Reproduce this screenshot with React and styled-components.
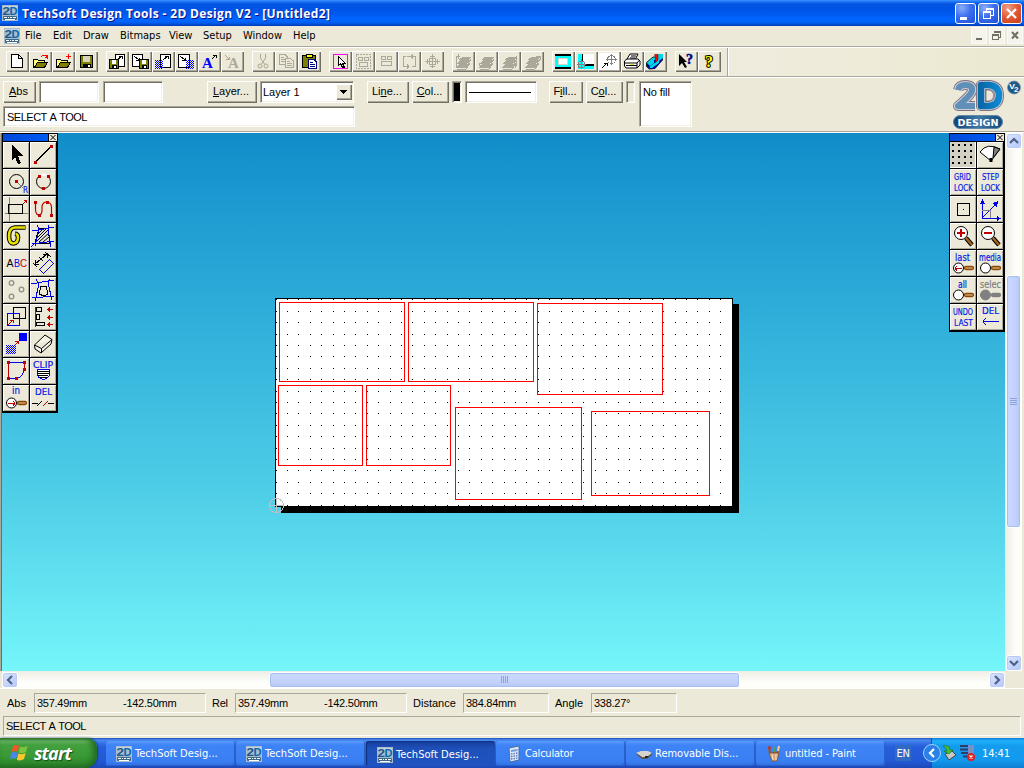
import React from "react";
import styled, { createGlobalStyle } from "styled-components";

const UI = `"DejaVu Sans Condensed", "Noto Sans", "Liberation Sans", sans-serif`;
const SANS = `"Liberation Sans", Arial, sans-serif`;

const GlobalStyle = createGlobalStyle`
  * { box-sizing: border-box; }
  html, body { margin: 0; padding: 0; overflow: hidden; }
  svg { display: block; flex: none; overflow: visible; }
`;

const Desktop = styled.div`
  width: 1024px;
  height: 768px;
  display: flex;
  flex-direction: column;
  overflow: hidden;
  background: #ece9d8;
  color: #000;
  font: 11px ${SANS};
  white-space: nowrap;
  cursor: default;
`;

/* ---------- title bar ---------- */
const TitleBar = styled.header`
  height: 26px;
  flex: none;
  display: flex;
  align-items: center;
  padding: 0 2px 0 2px;
  background: linear-gradient(#3d95ff 0, #1a6ff5 2px, #0353e0 4px, #0054e3 8px, #0059ee 14px, #0066ff 19px, #0063fb 22px, #0050d8 24px, #003bb5 26px);
`;
const TitleText = styled.h1`
  flex: 1;
  margin: 0 0 0 4px;
  font: bold 12px "Open Sans", "Noto Sans", sans-serif;
  letter-spacing: 0.34px;
  color: #fff;
  text-shadow: 1px 1px #0f1089;
`;
const CaptionButtons = styled.div`
  display: flex;
  gap: 2px;
`;
const CaptionButton = styled.div`
  width: 21px;
  height: 21px;
  border: 1px solid #fff;
  border-radius: 3px;
  background: ${(p) =>
    p.$close
      ? "radial-gradient(circle at 30% 20%, #f0a088 0, #e25c3a 45%, #c83c14 100%)"
      : "radial-gradient(circle at 30% 20%, #8aaef8 0, #3c6ff0 45%, #1c4fd8 100%)"};
`;

/* ---------- menu bar ---------- */
const MenuBar = styled.nav`
  height: 22px;
  flex: none;
  display: flex;
  align-items: center;
  padding: 0 1px 2px 4px;
  border-bottom: 1px solid #fff;
  box-shadow: inset 0 -1px #aca899;
  font-family: ${UI};
`;
const MenuItems = styled.div`
  display: flex;
  flex: 1;
  margin-left: 5px;
`;
const MenuItem = styled.span`
  width: ${(p) => p.$w}px;
`;
const ChildButtons = styled.div`
  display: flex;
  gap: 2px;
`;
const ChildButton = styled.div`
  width: 16px;
  height: 17px;
  background: #f5f4ec;
  border: 1px solid #fbfaf6;
`;

/* ---------- toolbar ---------- */
const Toolbar = styled.div`
  height: 30px;
  flex: none;
  display: flex;
  align-items: flex-start;
  gap: 8px;
  padding: 3px 0 0 6px;
  border-bottom: 1px solid #fff;
  box-shadow: inset 0 -1px #aca899;
  background: linear-gradient(90deg, transparent 728px, #efecdf 729px, #ece9d0);
`;
const ButtonGroup = styled.div`
  display: flex;
`;
const ToolButton = styled.div`
  width: 23px;
  height: 21px;
  background: #ece9d8;
  box-shadow: inset 1px 1px #fff, inset -1px -1px #716f64, inset -2px -2px #aca899;
  & > svg { margin-left: -1px; }
`;
const ToolbarEnd = styled.div`
  width: 2px;
  height: 28px;
  margin: -3px 0 0 -2px;
  background: #fff;
  border-left: 1px solid #aca899;
`;

/* ---------- property bar ---------- */
const PropertyBar = styled.div`
  height: 55px;
  flex: none;
  display: flex;
  align-items: flex-start;
  padding: 3px 3px 0;
  border-bottom: 1px solid #fff;
  box-shadow: inset 0 -1px #aca899;
`;
const PropertyLeft = styled.div`
  width: 351px;
  display: flex;
  flex-direction: column;
  gap: 3px;
`;
const PropertyRow = styled.div`
  display: flex;
  margin-left: ${(p) => p.$ml || 0}px;
`;
const PushButton = styled.div`
  width: ${(p) => p.$w}px;
  height: 22px;
  margin-left: ${(p) => p.$ml || 0}px;
  display: flex;
  align-items: center;
  justify-content: center;
  padding: 0 2px 2px 0;
  box-shadow: inset 1px 1px #fff, inset -1px -1px #716f64, inset -2px -2px #aca899;
`;
const Field = styled.div`
  width: ${(p) => p.$w}px;
  height: ${(p) => p.$h || 22}px;
  margin-left: ${(p) => p.$ml || 0}px;
  flex: none;
  padding: 4px 2px 0 3px;
  background: ${(p) => p.$bg || "#fff"};
  border: 1px solid;
  border-color: #aca899 #fff #fff #aca899;
  box-shadow: inset 1px 1px #716f64, inset -1px -1px #f1efe2;
  letter-spacing: ${(p) => p.$ls || 0}px;
  word-spacing: ${(p) => p.$ws || 0}px;
`;
const ComboField = styled(Field)`
  display: flex;
  justify-content: space-between;
  padding: 2px 1px 2px 2px;
  line-height: 17px;
`;
const ComboArrow = styled.div`
  width: 16px;
  height: 16px;
  background: #ece9d8;
  box-shadow: inset 1px 1px #fff, inset -1px -1px #716f64, inset -2px -2px #aca899;
`;
const LogoBox = styled.div`
  margin: -2px 0 0 auto;
`;

/* ---------- work area ---------- */
const Work = styled.main`
  height: 538px;
  flex: none;
  display: flex;
  padding: 0 1px 0 2px;
  background: #ece9d8;
  box-shadow: inset 1px 0 #aca899, inset 2px 0 #716f64;
`;
const Canvas = styled.div`
  position: relative;
  width: 1003px;
  height: 538px;
  background: linear-gradient(#108cc8 0%, #1c99d0 12%, #31b0db 36%, #50cfe8 68%, #74f6fa 100%);
`;
const Sheet = styled.div`
  position: absolute;
  left: 265px;
  top: 163px;
`;
const Palette = styled.aside`
  position: absolute;
  top: 0;
  left: ${(p) => p.$x}px;
  width: 56px;
  padding: 1px 2px 2px 1px;
  background: #000;
  display: flex;
  flex-direction: column;
  gap: 1px;
`;
const PaletteTitle = styled.div`
  height: 7px;
  margin-right: -1px;
  background: linear-gradient(90deg, #0048d8, #0060f8);
  display: flex;
  justify-content: flex-end;
`;
const PaletteGrid = styled.div`
  display: grid;
  grid-template-columns: 26px 26px;
  grid-auto-rows: 26px;
  gap: 1px;
`;
const Cell = styled.div`
  background: ${(p) => (p.$pressed ? "#d4d0c4" : "#ece9d8")};
  box-shadow: ${(p) =>
    p.$pressed ? "inset -1px -1px #fff" : "inset 1px 1px #fff, inset -1px -1px #aca899"};
`;

/* ---------- scroll bars ---------- */
const VScroll = styled.div`
  width: 17px;
  height: 538px;
  display: flex;
  flex-direction: column;
  align-items: center;
  background: linear-gradient(90deg, #eeede5, #fefefb 70%);
`;
const HScroll = styled.div`
  height: 17px;
  width: 1003px;
  margin-left: 2px;
  flex: none;
  display: flex;
  align-items: center;
  background: linear-gradient(#eeede5, #fefefb 70%);
`;
const HRow = styled.div`
  height: 17px;
  flex: none;
`;
const ScrollButton = styled.div`
  width: 16px;
  height: 16px;
  flex: none;
  border: 1px solid #fff;
  border-radius: 3px;
  background: linear-gradient(135deg, #dbe5ff, #b5c8fb);
  box-shadow: inset 0 0 0 1px #b9cbf5;
`;
const Thumb = styled.div`
  width: ${(p) => p.$w}px;
  height: ${(p) => p.$h}px;
  margin: ${(p) => p.$m};
  flex: none;
  display: flex;
  align-items: center;
  justify-content: center;
  border: 1px solid #fff;
  border-radius: 3px;
  background: linear-gradient(${(p) => (p.$vertical ? "90deg" : "180deg")}, #cbd9ff, #c3d3fd 60%, #b5c8f5);
  box-shadow: inset 0 0 0 1px #a9bfee;
`;

/* ---------- status ---------- */
const StatusArea = styled.footer`
  height: 50px;
  flex: none;
  padding: 4px 3px 0;
  border-top: 1px solid #fff;
`;
const StatusRow = styled.div`
  height: 20px;
  display: flex;
  align-items: center;
  margin-bottom: 3px;
`;
const StatusLabel = styled.span`
  width: ${(p) => p.$w}px;
  flex: none;
  padding-left: ${(p) => p.$pl}px;
  letter-spacing: ${(p) => p.$ls || 0}px;
`;
const StatusField = styled.div`
  width: ${(p) => p.$w}px;
  height: 20px;
  flex: none;
  display: flex;
  align-items: center;
  padding-left: 2px;
  letter-spacing: ${(p) => p.$ls || -0.26}px;
  word-spacing: ${(p) => p.$ws || 0}px;
  border: 1px solid;
  border-color: #aca899 #fff #fff #aca899;
  & > span { width: 86px; flex: none; }
  & > span + span { width: auto; }
`;

/* ---------- taskbar ---------- */
const Taskbar = styled.div`
  height: 30px;
  flex: none;
  display: flex;
  align-items: stretch;
  background: linear-gradient(#1f4fb8 0, #4a8cf2 2px, #3672e4 5px, #245edb 9px, #2358d4 24px, #1c49b4 30px);
  color: #fff;
  font-family: ${UI};
`;
const StartButton = styled.div`
  width: 97px;
  display: flex;
  align-items: center;
  padding: 0 0 1px 10px;
  gap: 5px;
  border-radius: 0 10px 12px 0;
  background: linear-gradient(#2f7a30 0, #6cb866 3px, #43a03f 7px, #389a36 18px, #2f8a2d 25px, #236f22 30px);
  box-shadow: inset -4px 0 6px #226a22, 1px 0 2px #143e90;
  font: italic bold 18px "Open Sans", "Noto Sans", sans-serif;
  letter-spacing: -0.9px;
  text-shadow: 1px 1px 1px #1c4c1c;
`;
const TaskList = styled.div`
  display: flex;
  flex: 1;
  gap: 1px;
  padding: 3px 0 2px 9px;
`;
const TaskButton = styled.div`
  width: 129px;
  display: flex;
  align-items: center;
  gap: 3px;
  padding: ${(p) => (p.$active ? "2px 0 0 11px" : "0 0 0 10px")};
  border-radius: 3px;
  letter-spacing: ${(p) => p.$ls || 0}px;
  background: ${(p) =>
    p.$active
      ? "linear-gradient(#173b98, #1e50b9 30%, #1f53c0)"
      : "linear-gradient(#5c9bfb 0, #3f84f7 4px, #3a7ff2 20px, #2f6fe0 25px)"};
  box-shadow: ${(p) => (p.$active ? "inset 1px 1px 1px #12307c" : "inset -1px -1px #2a60cc")};
`;
const Lang = styled.div`
  width: 16px;
  height: 16px;
  margin: 7px 20px 0 0;
  background: #316ac5;
  line-height: 17px;
  text-align: center;
  letter-spacing: -0.4px;
`;
const Tray = styled.div`
  position: relative;
  width: 93px;
  display: flex;
  align-items: center;
  justify-content: flex-end;
  padding-right: 14px;
  letter-spacing: -0.1px;
  border-left: 1px solid #0c59b9;
  background: linear-gradient(#0c7ee0 0, #1fb0f8 3px, #139bee 8px, #129aee 22px, #0d7ed2 30px);
`;
const TrayIcons = styled.div`
  position: absolute;
  left: -10px;
  top: 4px;
`;

/* ---------- drawing helpers ---------- */
const Svg = ({ w = 26, h = 26, children, crisp = true }) => (
  <svg width={w} height={h} viewBox={`0 0 ${w} ${h}`} fill="none" stroke="#000" shapeRendering={crisp ? "crispEdges" : "auto"}>
    {children}
  </svg>
);
const Dots = ({ at, c = "#c00000", s = 3 }) => (
  <g fill={c} stroke="none">
    {at.map(([x, y], i) => (
      <rect key={i} x={x - 1} y={y - 1} width={s} height={s} />
    ))}
  </g>
);
const Label = ({ x, y, w, c = "#0018e8", s = 9, children }) => (
  <text x={x} y={y} textLength={w} lengthAdjust="spacingAndGlyphs" fill={c} stroke={c} strokeWidth=".2" fontFamily="DejaVu Sans, sans-serif" fontSize={s}>
    {children}
  </text>
);
const Lens = ({ fill = "#fff", handle = "#8a4800", y = 18, stroke = "#000" }) => (
  <g shapeRendering="auto">
    <circle cx="8.5" cy={y} r="5" fill={fill} stroke={stroke} />
    <rect x="14.5" y={y - 1.5} width="9" height="3" rx="1.5" fill={handle === "#808080" ? handle : "#c8a070"} stroke={handle} strokeWidth="1.3" />
  </g>
);
const Arrow = () => <path d="M9 3V18L12 15L15 22L18 21L15 14H20Z" fill="#000" stroke="none" />;

const AppIcon = ({ size = 16 }) => (
  <svg width={size} height={size} viewBox="0 0 16 16">
    <rect width="16" height="16" fill="#a9bccb" />
    <path d="M1 1H15V3H1Z" fill="#c5d5e0" />
    <g fontFamily="Liberation Sans" fontWeight="bold" fontSize="11">
      <text x="0.5" y="9.5" textLength="7.5" lengthAdjust="spacingAndGlyphs" fill="#1c5888">2</text>
      <text x="7.5" y="9.5" textLength="8" lengthAdjust="spacingAndGlyphs" fill="#0868b0">D</text>
    </g>
    <rect x="1" y="11" width="14" height="4" rx="1" fill="#3c6888" />
    <path d="M2 12.5H5M6 12.5H7M8 12.5H10M11 12.5H14M3 14.5H13" stroke="#fff" />
  </svg>
);

/* ---------- toolbar drawings ---------- */
const Folder = () => (
  <g>
    <path d="M5.5 16.5V8.5H9.5L10.5 9.5H16.5V11.5" fill="#ffff80" />
    <path d="M6.5 16.5L9.5 11.5H19.5L16.5 16.5Z" fill="#808000" />
  </g>
);
const Disk = ({ x, y, s = 13 }) => (
  <g transform={`translate(${x} ${y})`}>
    <rect x=".5" y=".5" width={s - 1} height={s - 1} fill="#808000" />
    <rect x="3" y="1" width={s - 6} height={s / 2 - 1} fill={s > 11 ? "#d8d4c0" : "#fff"} stroke="none" />
    <rect x="3" y={s - 4} width={s - 5} height="4" fill="#000" stroke="none" />
    <rect x={s - 5} y={s - 3} width="2" height="2" fill="#fff" stroke="none" />
  </g>
);
const Dither = ({ x, y, w, h }) => {
  const d = [];
  for (let j = 0; j < h; j++) for (let i = j % 2; i < w; i += 2) d.push(`M${x + i} ${y + j}h1v1h-1z`);
  return <path d={d.join("")} fill="#0000ff" stroke="none" />;
};
const Page = ({ x, y, w = 9, h = 11 }) => <rect x={x + 0.5} y={y + 0.5} width={w} height={h} fill="#fff" />;
const G = "#aca899";
const Layers = ({ extra }) => (
  <g fill={G} stroke={G}>
    <path d="M6 16L9 13H18L15 16ZM7 12L10 9.5H19L16 12ZM9 8.5L12 6H20L17 8.5Z" />
    <path d="M6 18H15L19 12M17 13L20 8" fill="none" />
    <path d={extra} fill="none" />
  </g>
);

const toolGroups = [
  [
    <path key="a" d="M6.5 3.5H13.5L17.5 7.5V16.5H6.5ZM13.5 3.5V7.5H17.5" fill="#fff" />,
    <g key="b"><Folder /><path d="M13 6L15 4H18L19 7M17 6L19.5 7L20 4" stroke="#f00" /></g>,
    <g key="c"><Folder /><path d="M17.5 3V8M15 5.5H20" stroke="#f00" /></g>,
    <Disk key="d" x={6} y={4} />,
  ],
  [
    <g key="a"><Page x={10} y={3} h={12} w={9} /><Disk x={4} y={8} s={10} /><path d="M12 9L17 5M14 5.5H17V8" /></g>,
    <g key="b"><Page x={4} y={3} h={12} w={10} /><Disk x={11} y={8} s={10} /><path d="M6 5L11 9M8 9.5H11V7" /></g>,
    <g key="c"><Page x={9} y={3} h={13} w={10} /><Dither x={4} y={9} w={8} h={9} /><path d="M12 9L17 5M14 5.5H17V8" /></g>,
    <g key="d"><Page x={4} y={3} h={13} w={11} /><Dither x={12} y={9} w={8} h={9} /><path d="M6 5L11 9M8 9.5H11V7" /></g>,
    <g key="e"><text x="5" y="17" fontFamily="Liberation Serif" fontSize="15" fontWeight="bold" fill="#00f" stroke="none">A</text><path d="M15 8L19 4M16 4.5H19V7" /></g>,
    <g key="f"><text x="8" y="17" fontFamily="Liberation Serif" fontSize="15" fontWeight="bold" fill={G} stroke="none">A</text><path d="M5 4L9 8M6 8.5H9V6" stroke={G} /></g>,
  ],
  [
    <g key="a" stroke={G} shapeRendering="auto"><path d="M9.5 3V7L13.5 13M14.5 3V7L10.5 13" /><circle cx="9" cy="15" r="2" /><circle cx="15" cy="15" r="2" /></g>,
    <g key="b" stroke={G}><path d="M5.5 3.5H11L13.5 6V13.5H5.5ZM7 6.5H10M7 8.5H12M7 10.5H12" /><path d="M11.5 7.5H16L19.5 10V16.5H11.5Z" fill="#ece9d8" /><path d="M13 10.5H16M13 12.5H18M13 14.5H18" /></g>,
    <g key="c"><rect x="5.5" y="4.5" width="13" height="12" rx="1" fill="#808000" /><path d="M9 3.5H15V6.5H9Z" fill="#ff0" /><path d="M11.5 8.5H17L19.5 11V17.5H11.5Z" fill="#fff" stroke="#000080" /><path d="M13 11.5H16M13 13.5H18M13 15.5H18" stroke="#000080" /></g>,
  ],
  [
    <g key="a"><rect x="5.5" y="3.5" width="14" height="14" stroke="#f0f" /><path d="M10.5 5.5V14.5L12.5 12.5L14.5 16.5H16.5L14.5 12.5H17.5Z" fill="#fff" /></g>,
    <g key="b" stroke={G}><rect x="5.5" y="3.5" width="14" height="14" strokeDasharray="2 1" /><path d="M7.5 6.5H11.5V9.5H7.5ZM13.5 6.5H17.5V9.5H13.5ZM8.5 11.5H16.5V15.5H8.5Z" /></g>,
    <g key="c" stroke={G}><path d="M7.5 5.5H11.5V8.5H7.5ZM13.5 5.5H17.5V8.5H13.5ZM7.5 10.5H17.5V14.5H7.5Z" /></g>,
    <g key="d" stroke={G}><path d="M9 5.5H6.5V15.5H11M15 15.5H18.5V5.5H10M15.5 3V8M14.5 4V7M10.500 13V18M11.500 14V17" /></g>,
    <g key="e" stroke={G}><path d="M12.5 3V17M5 10.5H20M10 5.5H15M10 15.5H15M7.5 8V13M17.5 8V13M9.5 7.5H15.5V13.5H9.5Z" /></g>,
  ],
  [
    <Layers key="a" extra="M7 15H5.5V5.5H9M7 3V8" />,
    <Layers key="b" extra="M5 14.5H8M5 12V15M10 6.5H13" />,
    <Layers key="c" extra="M19.5 5V14.5H17M18 12V17" />,
    <Layers key="d" extra="M16 5.5H20V9M15 10L20 5" />,
  ],
  [
    <g key="a"><path d="M4 4H20V17H4Z" fill="#00ffff" stroke="none" /><path d="M4 4H20M4 17H20" strokeWidth="2" /><path d="M7.5 7.5H16.5V13.5H7.5Z" fill="#fff" stroke="#d8d4c0" /></g>,
    <g key="b"><path d="M4 3H20V18H4Z" fill="#0ff" stroke="none" /><path d="M9 3H20V13H9Z" fill="#fff" stroke="none" /><path d="M10 14H20" strokeWidth="2" /><path d="M8.5 3V10" /><circle cx="7.5" cy="13.5" r="3.5" stroke="#808080" /><path d="M7.5 8V18M3 13.5H12" stroke="#808080" /></g>,
    <g key="c"><path d="M2 2H22V19H2Z" fill="#fff" stroke="none" /><circle cx="14.5" cy="8.5" r="4" stroke="#808080" /><path d="M14.5 3V14M9 8.5H20" stroke="#808080" /><path d="M5 17L10 12M7 12.5H10V15" /></g>,
    <g key="d" shapeRendering="auto"><path d="M7 8L10 3H18L15 9" fill="#fff" /><path d="M4.5 10L7 8H18L20 10V14L17 17H6L4.5 15Z" fill="#fff" /><path d="M5 12H17L19.5 9M6 14.5H17M11 5H16M10 7H15M17 12V17" /><path d="M10 13.3H14" stroke="#dddd00" /></g>,
    <g key="e" shapeRendering="auto"><path d="M3.5 11.5L10 6H19.5V9L12 17.5L6 18L3.5 15.5Z" fill="#00d5e8" stroke="#000" strokeWidth=".8" /><path d="M4 12L7 15V18L4 15.5ZM7 15L11 12V9L19.5 6.5V9L12 17.5L7 18Z" fill="#000098" stroke="none" /><path d="M14 3H20V7L16 10V12L9 17H7V15L13 11Z" fill="#00d5e8" stroke="none" /><path d="M11.5 3.5H15V9L12.5 11.5V7Z" fill="#f00" stroke="#700" strokeWidth=".5" /></g>,
  ],
  [
    <g key="a" shapeRendering="auto"><path d="M5 3V15L8 12L11 17L13 16L10 11H13Z" fill="#000" stroke="none" /><text x="12" y="13" fontFamily="Liberation Serif" fontWeight="bold" fontSize="14" fill="#000080" stroke="#000080" strokeWidth=".5">?</text></g>,
    <text key="b" x="8" y="16" fontFamily="Liberation Serif" fontWeight="bold" fontSize="16" fill="#ff0" stroke="#000" strokeWidth="2" paintOrder="stroke">?</text>,
  ],
];

/* ---------- palette drawings ---------- */
const B = "#0000e8";
const R = "#c00000";
const leftTools = [
  <Arrow key={0} />,
  <g key={1}><path d="M5.5 20L21.5 4" /><Dots at={[[5, 20], [21, 4]]} /></g>,
  <g key={2}><circle cx="13.5" cy="12.5" r="7" shapeRendering="auto" /><path d="M14 13L20 19" stroke="#808080" /><Dots at={[[13, 12]]} /><Label x={20} y={24} w={5} s={9}>R</Label></g>,
  <g key={3}><circle cx="13.5" cy="12.5" r="7" shapeRendering="auto" /><path d="M9 7Q13.5 4 18 7" stroke="#fff" strokeWidth="2" /><Dots at={[[9, 7], [18, 7], [13, 19]]} /></g>,
  <g key={4}><path d="M6.5 1V25M2 17.5H25" stroke="#808080" /><rect x="5.5" y="8.5" width="14" height="9" /><path d="M20 8L24 4M21 4.5H23.5V7" stroke={R} /></g>,
  <g key={5} stroke={R}><path d="M5.5 7V14Q6 19 9 19Q12 19 12 14V10Q13 6 16.5 6Q21 6 21.5 11V19" shapeRendering="auto" strokeWidth="1.2" /><Dots at={[[5, 6], [9, 19], [17, 6], [21, 19]]} /></g>,
  <g key={6} shapeRendering="auto"><path d="M22.5 4.5H12Q6 5 6 13Q6 20.500 10.500 20.500Q15 20 15 14.500Q15 11 12 10.500" strokeWidth="4.6" /><path d="M22 4.500H12Q6 5 6 13Q6 20.500 10.500 20.500Q15 20 15 14.500Q15 11 12.500 10.700" stroke="#e8e000" strokeWidth="2.6" /></g>,
  <g key={7}><path d="M9 5H18L20 20H5Z" fill="#e0e0d8" /><path d="M8 11L14 5M7 15L17 5M6 19L18 7M9 19L19 10M13 19L19 14" shapeRendering="auto" /><path d="M2 21L24 18M7 2L9 6L5 23M2 7H9L24 4M19 2L18 6L21 24M5 20L1 24" stroke={B} /></g>,
  <g key={8} fontFamily="Liberation Sans" fontSize="11.5" stroke="none"><text x="3.5" y="17" textLength="7" lengthAdjust="spacingAndGlyphs" fill="#000">A</text><text x="11" y="17" textLength="6" lengthAdjust="spacingAndGlyphs" fill={B}>B</text><text x="17" y="17" textLength="7" lengthAdjust="spacingAndGlyphs" fill={R}>C</text></g>,
  <g key={9}><path d="M5 14L17 4M5 10V14H9M13 4H17V8M9 7L13 11M13 7L9 11M3 13L7 17M15 2L21 7" /><path d="M9.5 19.5L19.5 9.5L23.5 13.5L13.5 23.5Z" stroke={B} /></g>,
  <g key={10} stroke="#909088" shapeRendering="auto" strokeWidth="1.3"><circle cx="8.5" cy="6" r="2.3" /><circle cx="18.5" cy="12.5" r="2.3" /><circle cx="8.5" cy="19.5" r="2.3" /></g>,
  <g key={11}><path d="M6 2L9 7L5 24M1 7L24 3M20 2L18 6L22 23M2 21L24 19" stroke={B} /><path d="M11 9H16L18 17L14 19L9 17Z" /></g>,
  <g key={12}><rect x="10.5" y="3.5" width="12" height="11" /><rect x="4.5" y="9.5" width="12" height="12" stroke={B} /><path d="M5 21L10 16M7 16.5H10V19" stroke={R} /></g>,
  <g key={13}><path d="M6.5 3.5H11.5V7.5H6.5ZM6.5 10.5H9.5V15.5H6.5ZM6.5 18.5H14.5V21.5H6.5Z" /><path d="M5.5 3V23M17 5.5H23M17 13.5H23M17 20.5H23M19.5 3V8M18.5 4V7M19.5 11V16M18.5 12V15M19.5 18V23M18.5 19V22" stroke={R} /></g>,
  <g key={14}><rect x="16" y="2" width="8" height="8" fill="#0000ff" stroke="none" /><Dither x={3} y={14} w={10} h={9} /><path d="M12 14L15 11M12 10.5H15V13" stroke={R} /></g>,
  <g key={15} shapeRendering="auto"><path d="M4.5 14L15 4L22 8.5L21 13L11 22L5 18ZM4.5 14L11.5 17.5L22 8.5M11.5 17.5V22" fill="#f5f3e8" /></g>,
  <g key={16}><path d="M5.5 4.5H21.5V11Q20 19 13.5 20.5H5.5Z" stroke={B} /><path d="M5.5 4.5V20.5M21 4.5V11" stroke={R} /><Dots at={[[5, 4], [21, 4], [21, 11], [13, 20], [5, 20]]} /></g>,
  <g key={17}><Label x={3} y={10} w={20} s={9.5}>CLIP</Label><path d="M7.5 11.5H19.5V17Q18 21 13 21.5Q8 20 7.5 17Z" fill="#fff" stroke={B} /><path d="M7 13.5H19M7 15.5H19M8 17.5H18M9 19.5H17" /></g>,
  <g key={18}><Label x={9} y={9} w={8} s={10}>in</Label><Lens /><path d="M5 18.5H12M10 16L12 18L10 21" stroke={R} /></g>,
  <g key={19}><Label x={5} y={10} w={17} s={9.5}>DEL</Label><path d="M2 18.5H8M18 18.5H24" /><path d="M7 21L12 16" /><path d="M13 21L18 16" stroke={R} /></g>,
];

const gridDots = [];
for (let y = 2; y < 25; y += 6) for (let x = 2; x < 25; x += 6) gridDots.push([x + 1, y + 1]);
const Magnifier = ({ plus }) => (
  <g shapeRendering="auto">
    <path d="M16 15L22 22" stroke="#000" strokeWidth="4.5" />
    <path d="M16 15L22 22" stroke="#a86418" strokeWidth="2.5" />
    <circle cx="11" cy="10" r="6.5" fill="#fff" />
    <path d={plus ? "M7 10H15M11 6V14" : "M7 10H15"} stroke={R} strokeWidth="2" />
  </g>
);
const rightTools = [
  <Dots key={0} at={gridDots} c="#000" s={2} />,
  <g key={1} shapeRendering="auto"><path d="M3 10Q10 0 23 7L14 19Z" fill="#fff" /><path d="M17 5L23 7L16 16Z" fill="#808080" /><path d="M14 16V20" strokeWidth="3" /></g>,
  <g key={2}><Label x={4} y={11} w={17}>GRID</Label><Label x={4} y={22} w={19}>LOCK</Label></g>,
  <g key={3}><Label x={5} y={11} w={17}>STEP</Label><Label x={4} y={22} w={19}>LOCK</Label></g>,
  <g key={4}><rect x="7.5" y="7.5" width="12" height="12" /><path d="M13 13.5H14" /></g>,
  <g key={5}><path d="M5.5 22.5V5M5.5 22.5H23M5.5 21.5L19 8" stroke={B} /><path d="M5.5 3L8 8H3ZM24 22.5L20 20V25ZM21 5L20 11L15 7Z" fill={B} stroke="none" /><path d="M5 14.5H13.5V22" stroke="#808080" /></g>,
  <Magnifier key={6} plus />,
  <Magnifier key={7} />,
  <g key={8}><Label x={5} y={11} w={15} s={10}>last</Label><Lens /><path d="M5 18.5H12M7 16L5 18L7 21" stroke={R} /></g>,
  <g key={9}><Label x={2} y={11} w={22} s={10}>media</Label><Lens /></g>,
  <g key={10}><Label x={8} y={11} w={9} s={10}>all</Label><Lens /></g>,
  <g key={11}><Label x={3} y={11} w={21} s={10} c="#808080">selec</Label><Lens fill="#808080" handle="#808080" stroke="#808080" /></g>,
  <g key={12}><Label x={3} y={11} w={20}>UNDO</Label><Label x={4} y={22} w={19}>LAST</Label></g>,
  <g key={13}><Label x={5} y={10} w={17} s={9.5}>DEL</Label><path d="M6 17.5H22M9 14L6 17M6 18L9 21" stroke={B} /></g>,
];

const ToolPalette = ({ x, tools, firstPressed }) => (
  <Palette $x={x}>
    <PaletteTitle>
      <svg width="9" height="7" viewBox="0 0 9 7"><path d="M0 0H1V7H0Z" /><path d="M1 0H9V7H1Z" fill="#ece9d8" /><path d="M2.5 1L7.5 6M7.5 1L2.5 6" stroke="#000" /></svg>
    </PaletteTitle>
    <PaletteGrid>
      {tools.map((t, i) => (
        <Cell key={i} $pressed={firstPressed && i === 0}><Svg>{t}</Svg></Cell>
      ))}
    </PaletteGrid>
  </Palette>
);

/* ---------- drawing sheet ---------- */
const shapes = [
  [279, 302, 405, 382], [408, 302, 534, 382], [537, 303, 663, 395], [278, 385, 363, 466],
  [366, 385, 451, 466], [455, 407, 582, 500], [591, 411, 710, 496],
];
const sheetDots = [];
for (let j = 0; j < 19; j++)
  for (let i = 0; i < 41; i++)
    sheetDots.push(`M${Math.floor(276.02 + i * 11.4)} ${Math.floor(299.9 + j * 11.4)}h1v1h-1z`);

const DrawingSheet = () => (
  <Sheet>
    <svg width="476" height="220" viewBox="267 296 476 220" fill="none" shapeRendering="crispEdges">
      <rect x="281" y="304" width="458" height="209" fill="#000" />
      <rect x="275.5" y="298.5" width="457" height="208" fill="#fff" stroke="#000" />
      <path d={sheetDots.join("")} fill="#000" />
      {shapes.map(([a, b, c, d]) => (
        <rect key={`${a}-${b}`} x={a + 0.5} y={b + 0.5} width={c - a - 1} height={d - b - 1} stroke="#f00" />
      ))}
      <circle cx="276.5" cy="505.5" r="7" stroke="#c0c0c0" />
      <path d="M269 505.5H284M276.5 498V513" stroke="#c0c0c0" />
    </svg>
  </Sheet>
);

const BrandLogo = () => (
  <svg width="71" height="52" viewBox="950 79 71 52">
    <defs>
      <linearGradient id="dg" x1="0" x2="1"><stop offset="0" stopColor="#0868a8" /><stop offset="1" stopColor="#1088d0" /></linearGradient>
      <linearGradient id="pg" x1="0" x2="1"><stop offset="0" stopColor="#104070" /><stop offset=".5" stopColor="#4078a8" /><stop offset="1" stopColor="#104878" /></linearGradient>
    </defs>
    <g strokeLinejoin="round" fill="none">
      {[["#806f78", 10], ["#c8cedc", 8.2], ["#6090b8", 6]].map(([c, w]) => (
        <path key={c} d="M958 90Q959 85 965.500 85Q973 85 972 91Q971 95 958 106H975" stroke={c} strokeWidth={w} />
      ))}
      {[["#806f78", 10], ["#c8cedc", 8.2], ["url(#dg)", 6.5]].map(([c, w]) => (
        <path key={c} d="M981 85H989Q999 86 999 95.500Q999 105 989 106H981Z" stroke={c} strokeWidth={w} />
      ))}
      <path d="M986 90H989Q993.500 91 993.500 95.500Q993.500 100 989 101H986Z" fill="#ece9d8" stroke="#806f78" strokeWidth=".8" />
    </g>
    <rect x="953.5" y="115.5" width="49" height="13" rx="6.5" fill="url(#pg)" stroke="#6088a8" />
    <text x="957.5" y="125.8" textLength="41" lengthAdjust="spacingAndGlyphs" fontFamily="DejaVu Sans" fontWeight="bold" fontSize="9.5" fill="#fff">DESIGN</text>
    <circle cx="1014" cy="87.5" r="6.5" fill="#205888" stroke="#6890b0" strokeWidth=".7" />
    <text x="1009" y="89" textLength="6" lengthAdjust="spacingAndGlyphs" fontFamily="Liberation Sans" fontWeight="bold" fontSize="8" fill="#fff">V</text>
    <text x="1014" y="91.5" fontFamily="Liberation Sans" fontWeight="bold" fontSize="8" fill="#fff">2</text>
  </svg>
);

const Chevron = ({ d }) => (
  <svg width="14" height="14" viewBox="0 0 14 14" fill="none"><path d={d} stroke="#4d6185" strokeWidth="2.2" /></svg>
);
const WinFlag = () => (
  <svg width="19" height="19" viewBox="0 0 19 19">
    <path d="M3 3Q6 1 9 3L7.5 9Q5 7 1.5 9Z" fill="#f0582a" />
    <path d="M10 3.5Q13 5 17.5 3L16 9Q12 11 8.5 9.5Z" fill="#7cc43c" />
    <path d="M1.2 10Q5 8 7.5 10L6 16Q3 14.5 0 16Z" fill="#4a86f0" />
    <path d="M8.3 10.5Q12 12 15.7 10L14 16Q10 18.5 6.8 16.5Z" fill="#fcc62c" />
  </svg>
);
const CalcIcon = () => (
  <svg width="16" height="18" viewBox="0 0 16 18"><path d="M3 3L13 1V15L4 17Z" fill="#dfe8f6" stroke="#4a6ca8" /><path d="M5 5L11.5 4V6L5 7Z" fill="#6f9fe0" /><path d="M5 9L12 8M5 11.5L12 10.5M5 14L12 13" stroke="#5c80c0" strokeDasharray="1.5 1" strokeWidth="1.5" /></svg>
);
const DriveIcon = () => (
  <svg width="16" height="16" viewBox="0 0 16 16"><path d="M0 7L5 5H12L16 7L11 11H6Z" fill="#d8d4cc" /><path d="M0 7L6 11V13L1 9ZM6 11H11L16 7V9L11 13H6Z" fill="#605850" /><path d="M9 10H13L11 12H9Z" fill="#222" /></svg>
);
const PaintIcon = () => (
  <svg width="16" height="18" viewBox="0 0 16 18"><path d="M4 9L3 2M8 9V3M11 9L13 3" stroke="#b84810" strokeWidth="2" /><path d="M2 1L5 2L4 5Z" fill="#d02020" /><path d="M8 2V7" stroke="#50a050" strokeWidth="2" /><path d="M13 1L12 6" stroke="#f0d0a0" strokeWidth="2" /><path d="M3 8H13L11 16H6Z" fill="#d8a878" stroke="#784820" strokeWidth=".7" /><path d="M6 9L7 15M10 9V15" stroke="#f8e0c0" /></svg>
);

const menus = [["File", 28], ["Edit", 30], ["Draw", 37], ["Bitmaps", 49], ["View", 34], ["Setup", 40], ["Window", 50], ["Help", 30]];
const tasks = [
  ["TechSoft Desig...", <AppIcon key="i" />, 0.05],
  ["TechSoft Desig...", <AppIcon key="i" />, 0.05],
  ["TechSoft Desig...", <AppIcon key="i" />, 0.05, true],
  ["Calculator", <CalcIcon key="i" />, -0.2],
  ["Removable Dis...", <DriveIcon key="i" />, 0],
  ["untitled - Paint", <PaintIcon key="i" />, -0.1],
];

export default function App() {
  return (
    <Desktop>
      <GlobalStyle />
      <TitleBar>
        <AppIcon />
        <TitleText>TechSoft Design Tools - 2D Design V2 - [Untitled2]</TitleText>
        <CaptionButtons>
          <CaptionButton><Svg w={19} h={19}><path d="M4 14.5H11" stroke="#fff" strokeWidth="3" /></Svg></CaptionButton>
          <CaptionButton><Svg w={19} h={19}><path d="M7 4.5H14M14.5 4V11H12M4 8.5H11V14.5H4.5V8M7.5 4V7" stroke="#fff" /><path d="M4 8H12M7 5H15" stroke="#fff" strokeWidth="2" /></Svg></CaptionButton>
          <CaptionButton $close><Svg w={19} h={19} crisp={false}><path d="M5 5L14 14M14 5L5 14" stroke="#fff" strokeWidth="2.3" /></Svg></CaptionButton>
        </CaptionButtons>
      </TitleBar>
      <MenuBar>
        <AppIcon />
        <MenuItems>{menus.map(([t, w]) => <MenuItem key={t} $w={w}>{t}</MenuItem>)}</MenuItems>
        <ChildButtons>
          <ChildButton><Svg w={14} h={15}><path d="M4 11H10" stroke="#716f64" strokeWidth="2" /></Svg></ChildButton>
          <ChildButton><Svg w={14} h={15}><path d="M4 3.5H11M10.5 3V9.5H9M2 6.5H8M2.5 6V11.5H8.5V6M4 4.5H11M2 7.5H9" stroke="#716f64" /></Svg></ChildButton>
          <ChildButton><Svg w={14} h={15} crisp={false}><path d="M4 4L10 10.5M10 4L4 10.5" stroke="#716f64" strokeWidth="2" /></Svg></ChildButton>
        </ChildButtons>
      </MenuBar>
      <Toolbar>
        {toolGroups.map((g, i) => (
          <ButtonGroup key={i}>
            {g.map((icon, j) => <ToolButton key={j}><Svg w={23} h={21}>{icon}</Svg></ToolButton>)}
          </ButtonGroup>
        ))}
        <ToolbarEnd />
      </Toolbar>
      <PropertyBar>
        <PropertyLeft>
          <PropertyRow>
            <PushButton $w={33}><span><u>A</u>bs</span></PushButton>
            <Field $w={60} $ml={3} />
            <Field $w={60} $ml={4} />
            <PushButton $w={50} $ml={44}><span><u>L</u>ayer...</span></PushButton>
            <ComboField $w={94} $ml={3}>Layer 1<ComboArrow><Svg w={16} h={16}><path d="M4 6H11L7.5 10Z" fill="#000" stroke="none" /></Svg></ComboArrow></ComboField>
          </PropertyRow>
          <Field $w={352} $h={21} $ls={-0.5} $ws={1}>SELECT A TOOL</Field>
        </PropertyLeft>
        <PropertyRow $ml={13}>
          <PushButton $w={42}><span>Li<u>n</u>e...</span></PushButton>
          <PushButton $w={37} $ml={3}><span><u>C</u>ol...</span></PushButton>
          <Field $w={10} $ml={3} $bg="#000" />
          <Field $w={72} $ml={3}><Svg w={66} h={14}><path d="M0 6.5H62" /></Svg></Field>
          <PushButton $w={34} $ml={12}><span>F<u>i</u>ll...</span></PushButton>
          <PushButton $w={37} $ml={3}><span>C<u>o</u>l...</span></PushButton>
          <Field $w={9} $ml={3} $bg="#ece9d8" />
          <Field $w={53} $h={46} $ml={4} $ls={-0.1}>No fill</Field>
        </PropertyRow>
        <LogoBox><BrandLogo /></LogoBox>
      </PropertyBar>
      <Work>
        <Canvas>
          <DrawingSheet />
          <ToolPalette x={0} tools={leftTools} />
          <ToolPalette x={947} tools={rightTools} firstPressed />
        </Canvas>
        <VScroll>
          <ScrollButton><Chevron d="M3 9L7 5L11 9" /></ScrollButton>
          <Thumb $vertical $w={15} $h={253} $m="126px 0 127px">
            <Svg w={7} h={8}><path d="M0 .5H7M0 2.5H7M0 4.5H7M0 6.5H7" stroke="#8ba3d8" /></Svg>
          </Thumb>
          <ScrollButton><Chevron d="M3 5L7 9L11 5" /></ScrollButton>
        </VScroll>
      </Work>
      <HRow>
        <HScroll>
          <ScrollButton><Chevron d="M9 3L5 7L9 11" /></ScrollButton>
          <Thumb $w={471} $h={16} $m="0 249px 0 251px">
            <Svg w={8} h={7}><path d="M.5 0V7M2.5 0V7M4.5 0V7M6.5 0V7" stroke="#8ba3d8" /></Svg>
          </Thumb>
          <ScrollButton><Chevron d="M5 3L9 7L5 11" /></ScrollButton>
        </HScroll>
      </HRow>
      <StatusArea>
        <StatusRow>
          <StatusLabel $w={31} $pl={4}>Abs</StatusLabel>
          <StatusField $w={172}><span>357.49mm</span><span>-142.50mm</span></StatusField>
          <StatusLabel $w={29} $pl={6} $ls={-0.3}>Rel</StatusLabel>
          <StatusField $w={172}><span>357.49mm</span><span>-142.50mm</span></StatusField>
          <StatusLabel $w={56} $pl={6}>Distance</StatusLabel>
          <StatusField $w={86}>384.84mm</StatusField>
          <StatusLabel $w={42} $pl={6}>Angle</StatusLabel>
          <StatusField $w={86}>338.27°</StatusField>
        </StatusRow>
        <StatusField $w={1018} $ls={-0.5} $ws={1}>SELECT A TOOL</StatusField>
      </StatusArea>
      <Taskbar>
        <StartButton><WinFlag />start</StartButton>
        <TaskList>
          {tasks.map(([t, icon, ls, active], i) => <TaskButton key={i} $active={active} $ls={ls}>{icon}{t}</TaskButton>)}
        </TaskList>
        <Lang>EN</Lang>
        <Tray>
          <TrayIcons>
            <svg width="56" height="22" viewBox="0 0 56 22">
              <circle cx="10" cy="11" r="8.5" fill="#2a80e8" stroke="#9cd4fa" />
              <path d="M12 7L8 11L12 15" fill="none" stroke="#fff" strokeWidth="2.2" />
              <path d="M23 12L30 9L34 13L27 18Z" fill="#c8c8c8" stroke="#404850" /><path d="M21 4Q27 2 28 8L31 8L27 12L22 9H25Q25 6 21 4Z" fill="#48c030" stroke="#187018" strokeWidth=".6" />
              <path d="M38 4H46M38 7.5H46M39 11H46M41 14.5H47" stroke="#303c68" strokeWidth="2.2" /><path d="M46 3H52V13L48 15L46 13Z" fill="#7890c8" /><circle cx="49" cy="15" r="4" fill="#e02020" /><path d="M47.5 13.5L50.5 16.5M50.5 13.5L47.5 16.5" stroke="#fff" strokeWidth="1.2" />
            </svg>
          </TrayIcons>
          14:41
        </Tray>
      </Taskbar>
    </Desktop>
  );
}
